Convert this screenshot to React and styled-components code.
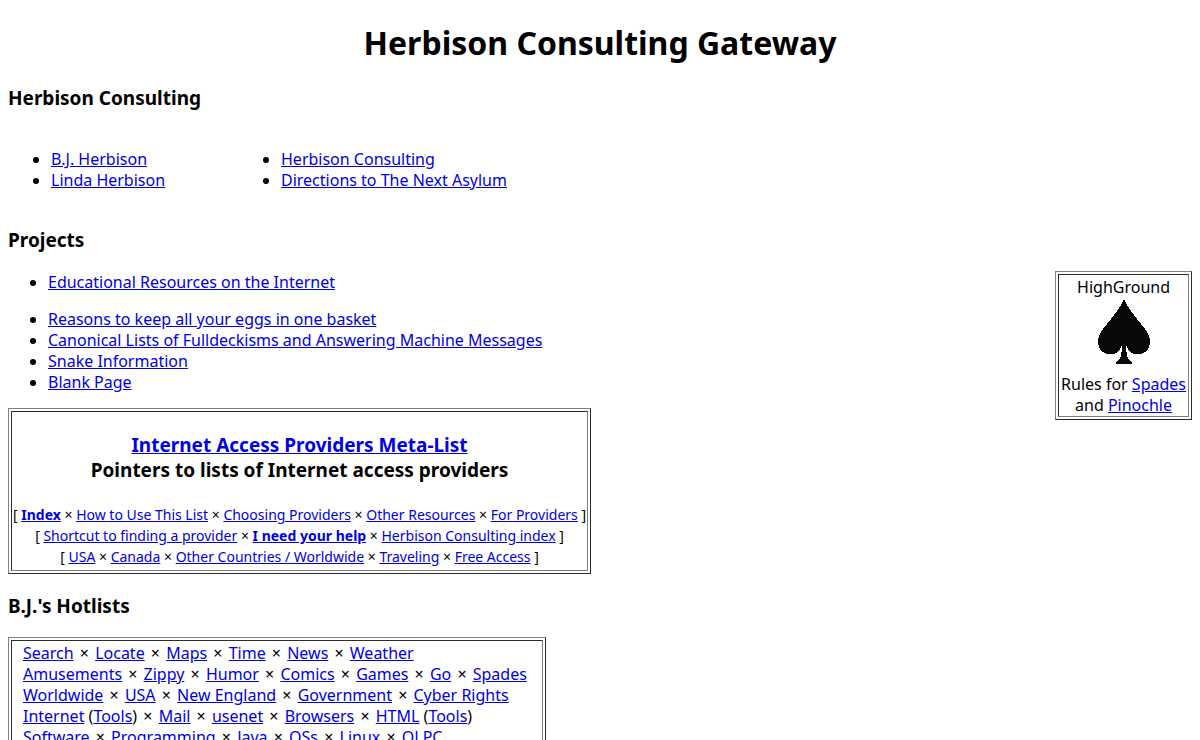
import { Fragment } from 'react';
import styled, { createGlobalStyle } from 'styled-components';

const GlobalStyle = createGlobalStyle`
  body {
    margin: 0 8px;
    background: #fff;
    color: #000;
    font-family: 'Noto Sans', 'Open Sans', sans-serif;
    font-size: 16px;
    line-height: 21px;
  }
`;

const PageTitle = styled.h1`
  margin: 22px 0;
  font-size: 32px;
  font-weight: 700;
  line-height: 42px;
  text-align: center;
`;

const SectionTitle = styled.h3`
  margin: 0;
  font-size: 19px;
  font-weight: 700;
  line-height: 25px;
`;

const Link = styled.a`
  color: #0000e0;
  font-weight: ${({ $strong }) => ($strong ? 700 : 'inherit')};
  text-decoration: underline;
`;

const People = styled.div`
  display: flex;
  margin: 18px 0 19px;
  padding: 4px 3px 2px;
`;

const LinkList = styled.ul`
  margin: 16px 0;
  padding-left: 40px;
  min-width: ${({ $wide }) => ($wide ? '190px' : '0')};
`;

const Columns = styled.div`
  display: flex;
  justify-content: space-between;
  align-items: flex-start;
  margin-top: 18px;
`;

const Main = styled.div`
  > ${LinkList} {
    margin-bottom: 15px;
  }

  > ${LinkList}:first-child {
    margin-top: 1px;
  }
`;

const Frame = styled.div`
  width: fit-content;
  padding: 2px;
  border: 1px solid;
  border-color: #808080 #2c2c2c #2c2c2c #808080;
`;

const FrameCell = styled.div`
  border: 1px solid;
  border-color: #2c2c2c #808080 #808080 #2c2c2c;
`;

const MetaCell = styled(FrameCell)`
  padding: 21px 1px 3px;
  text-align: center;
`;

const SpadesCell = styled(FrameCell)`
  padding: 2px 2px 0;
  text-align: center;
`;

const HotCell = styled(FrameCell)`
  padding: 2px 15px 2px 11px;
`;

const MetaNav = styled.nav`
  margin-top: 21px;
  font-size: 14px;
`;

const Hotlists = styled.section`
  margin-top: 20px;

  ${Frame} {
    margin-top: 18px;
  }
`;

const Separator = styled.span`
  margin: 0 ${({ $tight }) => ($tight ? '0' : '2px')};
`;

const SpadeIcon = styled.svg`
  display: block;
  margin: 1px auto 9px;
  fill: #080808;
`;

const people = ['B.J. Herbison', 'Linda Herbison'];
const consulting = ['Herbison Consulting', 'Directions to The Next Asylum'];

const education = ['Educational Resources on the Internet'];
const projects = [
  'Reasons to keep all your eggs in one basket',
  'Canonical Lists of Fulldeckisms and Answering Machine Messages',
  'Snake Information',
  'Blank Page',
];

const metaRows = [
  [
    { label: 'Index', strong: true },
    { label: 'How to Use This List' },
    { label: 'Choosing Providers' },
    { label: 'Other Resources' },
    { label: 'For Providers' },
  ],
  [
    { label: 'Shortcut to finding a provider' },
    { label: 'I need your help', strong: true },
    { label: 'Herbison Consulting index' },
  ],
  [
    { label: 'USA' },
    { label: 'Canada' },
    { label: 'Other Countries / Worldwide' },
    { label: 'Traveling' },
    { label: 'Free Access' },
  ],
];

const hotRows = [
  ['Search', 'Locate', 'Maps', 'Time', 'News', 'Weather'],
  ['Amusements', 'Zippy', 'Humor', 'Comics', 'Games', 'Go', 'Spades'],
  ['Worldwide', 'USA', 'New England', 'Government', 'Cyber Rights'],
  ['Internet', 'Mail', 'usenet', 'Browsers', 'HTML'],
  ['Software', 'Programming', 'Java', 'OSs', 'Linux', 'OLPC'],
].map(row =>
  row.map(label => ({ label, tools: label === 'Internet' || label === 'HTML' }))
);

const Links = ({ items, wide }) => (
  <LinkList $wide={wide}>
    {items.map(item => (
      <li key={item}>
        <Link href="#">{item}</Link>
      </li>
    ))}
  </LinkList>
);

const LinkRow = ({ items, brackets }) => (
  <div>
    {brackets && '[ '}
    {items.map((item, i) => (
      <Fragment key={item.label}>
        {i > 0 && (
          <>
            {' '}
            <Separator $tight={brackets}>×</Separator>{' '}
          </>
        )}
        <Link href="#" $strong={item.strong}>
          {item.label}
        </Link>
        {item.tools && (
          <>
            {' '}
            (<Link href="#">Tools</Link>)
          </>
        )}
      </Fragment>
    ))}
    {brackets && ' ]'}
  </div>
);

const Spade = () => (
  <SpadeIcon width="52" height="66" viewBox="0 0 52 66" shapeRendering="crispEdges" aria-hidden="true">
    <path d="M26 0 C29 8 36 16 43 25 C49 32 52 37 52 43 C52 50 47 55 42 55 H36 C32 54 30 51 28 46 C28 54 29 61 34 63 V65 H18 V63 C23 61 24 54 24 46 C22 51 20 54 16 55 H10 C5 55 0 50 0 43 C0 37 3 32 9 25 C16 16 23 8 26 0Z" />
  </SpadeIcon>
);

export default function App() {
  return (
    <>
      <GlobalStyle />
      <PageTitle>Herbison Consulting Gateway</PageTitle>

      <SectionTitle>Herbison Consulting</SectionTitle>
      <People>
        <Links items={people} wide />
        <Links items={consulting} />
      </People>

      <SectionTitle>Projects</SectionTitle>
      <Columns>
        <Main>
          <Links items={education} />
          <Links items={projects} />
          <Frame>
            <MetaCell>
              <SectionTitle>
                <Link href="#">Internet Access Providers Meta-List</Link>
                <br />
                Pointers to lists of Internet access providers
              </SectionTitle>
              <MetaNav>
                {metaRows.map(row => (
                  <LinkRow key={row[0].label} items={row} brackets />
                ))}
              </MetaNav>
            </MetaCell>
          </Frame>
        </Main>
        <Frame as="aside">
          <SpadesCell>
            HighGround
            <Spade />
            Rules for <Link href="#">Spades</Link>
            <br />
            and <Link href="#">Pinochle</Link>
          </SpadesCell>
        </Frame>
      </Columns>

      <Hotlists>
        <SectionTitle>B.J.'s Hotlists</SectionTitle>
        <Frame>
          <HotCell>
            {hotRows.map(row => (
              <LinkRow key={row[0].label} items={row} />
            ))}
          </HotCell>
        </Frame>
      </Hotlists>
    </>
  );
}
